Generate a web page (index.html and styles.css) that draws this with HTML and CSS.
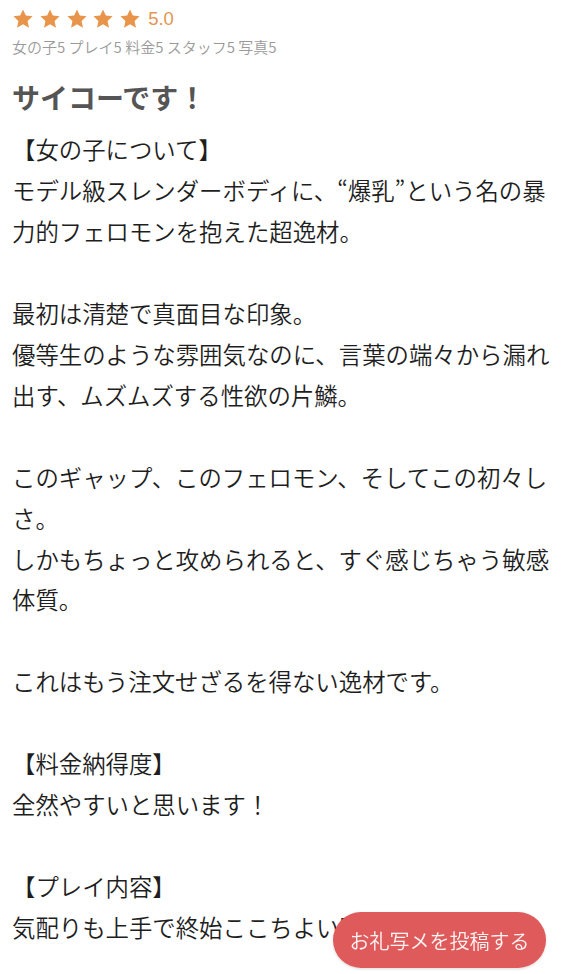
FILE: index.html
```html
<!DOCTYPE html>
<html lang="ja">
<head>
<meta charset="utf-8">
<link rel="stylesheet" href="styles.css">
</head>
<body>
<main class="review">
  <div class="rating">
    <div class="stars">
      <svg class="star" viewBox="0 0 24 24"><polygon points="12,1.5 15.1,8.3 22.5,9.1 17,14.1 18.5,21.5 12,17.8 5.5,21.5 7,14.1 1.5,9.1 8.9,8.3"/></svg>
      <svg class="star" viewBox="0 0 24 24"><polygon points="12,1.5 15.1,8.3 22.5,9.1 17,14.1 18.5,21.5 12,17.8 5.5,21.5 7,14.1 1.5,9.1 8.9,8.3"/></svg>
      <svg class="star" viewBox="0 0 24 24"><polygon points="12,1.5 15.1,8.3 22.5,9.1 17,14.1 18.5,21.5 12,17.8 5.5,21.5 7,14.1 1.5,9.1 8.9,8.3"/></svg>
      <svg class="star" viewBox="0 0 24 24"><polygon points="12,1.5 15.1,8.3 22.5,9.1 17,14.1 18.5,21.5 12,17.8 5.5,21.5 7,14.1 1.5,9.1 8.9,8.3"/></svg>
      <svg class="star" viewBox="0 0 24 24"><polygon points="12,1.5 15.1,8.3 22.5,9.1 17,14.1 18.5,21.5 12,17.8 5.5,21.5 7,14.1 1.5,9.1 8.9,8.3"/></svg>
    </div>
    <span class="score">5.0</span>
  </div>
  <div class="breakdown">女の子5 プレイ5 料金5 スタッフ5 写真5</div>
  <h1 class="title">サイコーです！</h1>
  <div class="body">【女の子について】
モデル級スレンダーボディに、“爆乳”という名の暴力的フェロモンを抱えた超逸材。

最初は清楚で真面目な印象。
優等生のような雰囲気なのに、言葉の端々から漏れ出す、ムズムズする性欲の片鱗。

このギャップ、このフェロモン、そしてこの初々しさ。
しかもちょっと攻められると、すぐ感じちゃう敏感体質。

これはもう注文せざるを得ない逸材です。

【料金納得度】
全然やすいと思います！

【プレイ内容】
気配りも上手で終始ここちよい時間でした。</div>
</main>
<button class="post-btn">お礼写メを投稿する</button>
</body>
</html>
```

FILE: styles.css
```css
html, body {
  margin: 0;
  padding: 0;
  background: #ffffff;
}

body {
  font-family: "Noto Sans CJK JP", "Noto Sans", sans-serif;
  width: 576px;
  height: 974px;
  overflow: hidden;
}

.review {
  padding: 9px 12px 0 12px;
}

.rating {
  display: flex;
  align-items: center;
  height: 20px;
}

.stars {
  display: flex;
  gap: 4.8px;
}

.star {
  width: 22px;
  height: 22px;
  fill: #e8954b;
  display: block;
}

.score {
  margin-left: 7px;
  font-family: "Liberation Sans", "Noto Sans", sans-serif;
  font-size: 18.5px;
  color: #e39552;
  line-height: 20px;
}

.breakdown {
  margin-top: 8px;
  font-size: 15px;
  font-weight: 350;
  line-height: 20px;
  color: #9a9a9a;
  white-space: nowrap;
}

.title {
  margin: 22px 0 0 0;
  font-size: 28px;
  font-weight: 700;
  line-height: 36px;
  color: #555555;
}

.body {
  margin-top: 14px;
  font-size: 23.4px;
  font-weight: 350;
  line-height: 40.95px;
  color: #1e1e1e;
  white-space: pre-line;
  width: 552px;
}

.post-btn {
  position: fixed;
  right: 30px;
  bottom: 6px;
  width: 213px;
  height: 56px;
  border: none;
  border-radius: 28px;
  background: #df5a5b;
  color: #fff3f3;
  font-family: "Noto Sans CJK JP", sans-serif;
  font-size: 20px;
  font-weight: 350;
  padding: 0;
  box-shadow: 0 1px 3px rgba(0, 0, 0, 0.15);
}
```
